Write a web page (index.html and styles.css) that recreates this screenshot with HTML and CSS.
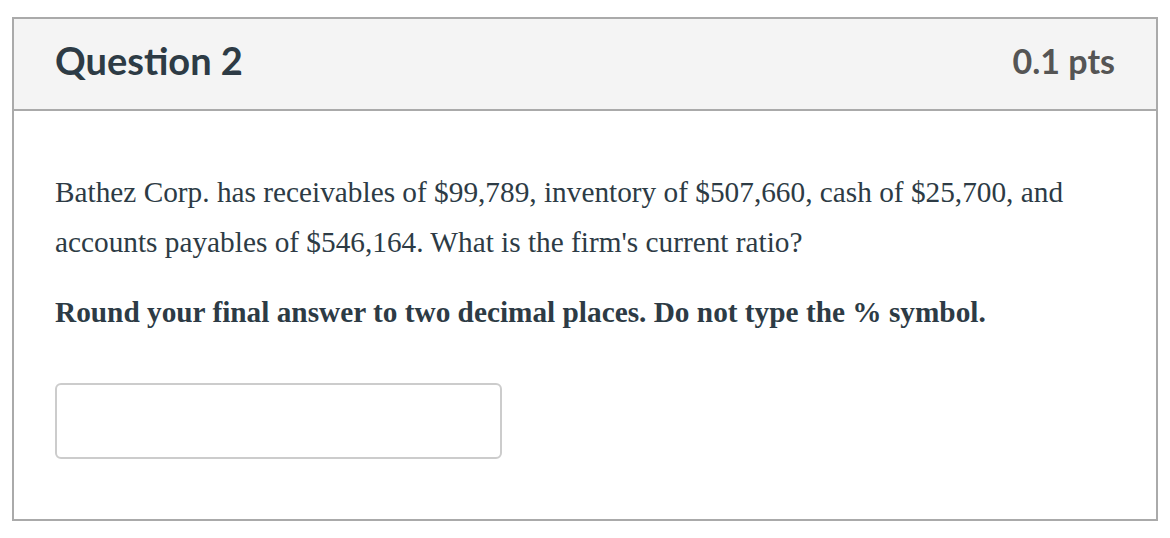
FILE: index.html
```html
<!DOCTYPE html>
<html>
<head>
<meta charset="utf-8">
<link rel="stylesheet" href="styles.css">
</head>
<body>
<div class="question">
  <div class="header">
    <h2 class="title">Question 2</h2>
    <span class="points">0.1 pts</span>
  </div>
  <div class="body">
    <p class="text">Bathez Corp. has receivables of $99,789, inventory of $507,660, cash of $25,700, and accounts payables of $546,164. What is the firm's current ratio?</p>
    <p class="text bold">Round your final answer to two decimal places. Do not type the % symbol.</p>
    <div class="answer"><input class="input" type="text"></div>
  </div>
</div>
</body>
</html>
```
FILE: styles.css
```css
html, body { margin: 0; padding: 0; background: #fff; }
body { padding: 17px 12px 0 12px; }
.question {
  border: 2px solid #aaaaaa;
  width: 1146px;
  box-sizing: border-box;
  height: 504px;
}
.header {
  background: #f4f4f4;
  border-bottom: 2px solid #aaaaaa;
  height: 92px;
  box-sizing: border-box;
  display: flex;
  align-items: center;
  justify-content: space-between;
  padding: 0 41px 8px 41px;
}
.title {
  margin: 0;
  font-family: Lato, sans-serif;
  font-weight: 700;
  font-size: 38px;
  color: #2d3b45;
}
.points {
  font-family: Lato, sans-serif;
  font-weight: 700;
  font-size: 34px;
  color: #555555;
}
.body {
  padding: 56px 41px 0 41px;
}
.text {
  margin: 0 0 20px 0;
  font-family: "Liberation Serif", serif;
  font-size: 29.3px;
  line-height: 50px;
  color: #2d3b45;
}
.bold { font-weight: 700; }
.answer { padding-top: 26px; }
.input {
  display: block;
  width: 447px;
  height: 76px;
  box-sizing: border-box;
  border: 2px solid #cccccc;
  border-radius: 6px;
  background: #fff;
}
```
